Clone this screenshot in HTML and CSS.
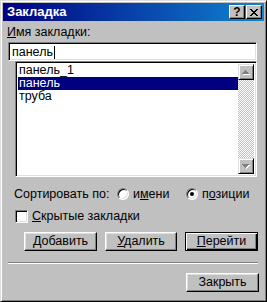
FILE: index.html
```html
<!DOCTYPE html>
<html lang="ru">
<head>
    <meta charset="UTF-8">
    <meta name="viewport" content="width=device-width, initial-scale=1.0">
    <title>Закладка</title>
    <link rel="stylesheet" href="styles.css">
</head>
<body>
    <div class="window">
        <div class="titlebar">
            <span class="title">Закладка</span>
            <div class="title-buttons">
                <span class="tbtn help">?</span>
                <span class="tbtn close">
                    <svg width="8" height="7" viewBox="0 0 8 7" shape-rendering="crispEdges">
                        <path fill="#000" d="M0 0h2v1h-2z M6 0h2v1h-2z M1 1h2v1h-2z M5 1h2v1h-2z M2 2h4v1h-4z M3 3h2v1h-2z M2 4h4v1h-4z M1 5h2v1h-2z M5 5h2v1h-2z M0 6h2v1h-2z M6 6h2v1h-2z"/>
                    </svg>
                </span>
            </div>
        </div>

        <div class="content">
            <div class="field-label"><u>И</u>мя закладки:</div>
            <div class="name-input"><span>панель</span><span class="caret"></span></div>

            <!-- bookmark list -->
            <div class="listbox">
                <ul class="items">
                    <li class="first">панель_1</li>
                    <li class="selected">панель</li>
                    <li>труба</li>
                </ul>
                <div class="scrollbar">
                    <div class="sbtn">
                        <svg width="8" height="5" viewBox="0 0 8 5" shape-rendering="crispEdges">
                            <path fill="#fff" transform="translate(1 1)" d="M3 0h1v1h-1z M2 1h3v1h-3z M1 2h5v1h-5z M0 3h7v1h-7z"/>
                            <path fill="#808080" d="M3 0h1v1h-1z M2 1h3v1h-3z M1 2h5v1h-5z M0 3h7v1h-7z"/>
                        </svg>
                    </div>
                    <div class="track"></div>
                    <div class="sbtn">
                        <svg width="8" height="5" viewBox="0 0 8 5" shape-rendering="crispEdges">
                            <path fill="#fff" transform="translate(1 1)" d="M0 0h7v1h-7z M1 1h5v1h-5z M2 2h3v1h-3z M3 3h1v1h-1z"/>
                            <path fill="#808080" d="M0 0h7v1h-7z M1 1h5v1h-5z M2 2h3v1h-3z M3 3h1v1h-1z"/>
                        </svg>
                    </div>
                </div>
            </div>

            <div class="sort-row">
                <span class="sort-label">Сортировать по:</span>
                <span class="radio-item by-name"><span class="radio"></span><span>и<u>м</u>ени</span></span>
                <span class="radio-item by-pos"><span class="radio checked"></span><span>п<u>о</u>зиции</span></span>
            </div>

            <div class="check-row">
                <span class="checkbox"></span><span><u>С</u>крытые закладки</span>
            </div>

            <div class="button-row">
                <button class="btn"><u>Д</u>обавить</button>
                <button class="btn narrow"><u>У</u>далить</button>
                <button class="btn default"><u>П</u>ерейти</button>
            </div>

            <div class="separator"></div>

            <div class="footer">
                <button class="btn">Закрыть</button>
            </div>
        </div>
    </div>
</body>
</html>
```

FILE: styles.css
```css
* {
    box-sizing: border-box;
}
body {
    margin: 0;
    background-color: #c0c0c0;
    font-family: "Liberation Sans", Arial, sans-serif;
    font-size: 12.5px;
    color: #000;
}
u {
    text-decoration: underline;
    text-underline-offset: 1px;
}
.window {
    width: 267px;
    height: 302px;
    padding: 2px;
    background-color: #c0c0c0;
    border: 1px solid;
    border-color: #dfdfdf #000 #000 #dfdfdf;
    box-shadow: inset 1px 1px #fff, inset -1px -1px #808080;
    display: flex;
    flex-direction: column;
}
.titlebar {
    height: 18px;
    flex: none;
    display: flex;
    align-items: center;
    justify-content: space-between;
    padding: 0 2px 0 4px;
    background: linear-gradient(to right, #000080, #1084d0);
}
.title {
    color: #fff;
    font-weight: bold;
    font-size: 13px;
    line-height: 18px;
}
.title-buttons {
    display: flex;
    gap: 1px;
}
.tbtn {
    width: 16px;
    height: 14px;
    display: flex;
    align-items: center;
    justify-content: center;
    background-color: #c0c0c0;
    border: 1px solid;
    border-color: #fff #000 #000 #fff;
    box-shadow: inset -1px -1px #808080;
    font-weight: bold;
    font-size: 12px;
    line-height: 12px;
}
.content {
    display: flex;
    flex-direction: column;
    align-items: flex-start;
}
.field-label {
    margin: 4px 0 0 4px;
    line-height: 14px;
}
.name-input {
    margin: 3px 0 0 5px;
    width: 249px;
    height: 19px;
    padding: 1px 0 0 3px;
    background-color: #fff;
    border: 1px solid;
    border-color: #808080 #fff #fff #808080;
    box-shadow: inset 1px 1px #000, inset -1px -1px #dfdfdf;
    line-height: 14px;
    display: flex;
    align-items: center;
}
.caret {
    display: inline-block;
    width: 1px;
    height: 13px;
    margin-left: 1px;
    background-color: #000;
}
.listbox {
    margin-left: 12px;
    width: 242px;
    height: 116px;
    padding: 2px;
    display: flex;
    background-color: #fff;
    border: 1px solid;
    border-color: #808080 #fff #fff #808080;
    box-shadow: inset 1px 1px #000, inset -1px -1px #dfdfdf;
}
.items {
    list-style: none;
    margin: 0;
    padding: 0;
    flex: 1;
}
.items li {
    height: 13px;
    line-height: 12px;
    padding-left: 1px;
}
.items li.first {
    position: relative;
    z-index: 1;
}
.items li.selected {
    background-color: #000080;
    color: #fff;
}
.scrollbar {
    width: 16px;
    display: flex;
    flex-direction: column;
}
.sbtn {
    height: 16px;
    flex: none;
    display: flex;
    align-items: center;
    justify-content: center;
    background-color: #c0c0c0;
    border: 1px solid;
    border-color: #dfdfdf #000 #000 #dfdfdf;
    box-shadow: inset 1px 1px #fff, inset -1px -1px #808080;
}
.track {
    flex: 1;
    background: repeating-conic-gradient(#c0c0c0 0 25%, #fff 0 50%) 0 0 / 2px 2px;
}
.sort-row {
    margin: 10px 0 0 11px;
    height: 14px;
    display: flex;
    align-items: center;
    line-height: 14px;
}
.sort-label {
    flex: none;
    width: 103px;
}
.radio-item {
    flex: none;
    display: flex;
    align-items: center;
    gap: 4px;
}
.by-name {
    width: 69px;
}
.radio {
    width: 12px;
    height: 12px;
    border-radius: 50%;
    background-color: #fff;
    border: 1px solid;
    border-color: #808080 #fff #fff #808080;
    box-shadow: inset 1px 1px #000, inset -1px -1px #dfdfdf;
    display: flex;
    align-items: center;
    justify-content: center;
}
.radio.checked::after {
    content: "";
    width: 4px;
    height: 4px;
    border-radius: 50%;
    background-color: #000;
}
.check-row {
    margin: 9px 0 0 12px;
    height: 13px;
    display: flex;
    align-items: center;
    gap: 4px;
    line-height: 13px;
}
.checkbox {
    width: 13px;
    height: 13px;
    background-color: #fff;
    border: 1px solid;
    border-color: #808080 #fff #fff #808080;
    box-shadow: inset 1px 1px #000, inset -1px -1px #dfdfdf;
}
.button-row {
    margin: 9px 0 0 21px;
    display: flex;
    gap: 8px;
}
.btn {
    width: 73px;
    height: 19px;
    padding: 0;
    font-family: inherit;
    font-size: 12.5px;
    line-height: 15px;
    color: #000;
    background-color: #c0c0c0;
    border: 1px solid;
    border-color: #fff #000 #000 #fff;
    box-shadow: inset -1px -1px #808080, inset 1px 1px #dfdfdf;
}
.btn.narrow {
    width: 72px;
}
.btn.default {
    border-color: #000;
    box-shadow: inset 1px 1px #fff, inset -1px -1px #000, inset -2px -2px #808080;
}
.separator {
    margin: 11px 0 0 5px;
    width: 250px;
    border-top: 1px solid #808080;
    border-bottom: 1px solid #fff;
}
.footer {
    margin: 9px 0 0 183px;
}
```
